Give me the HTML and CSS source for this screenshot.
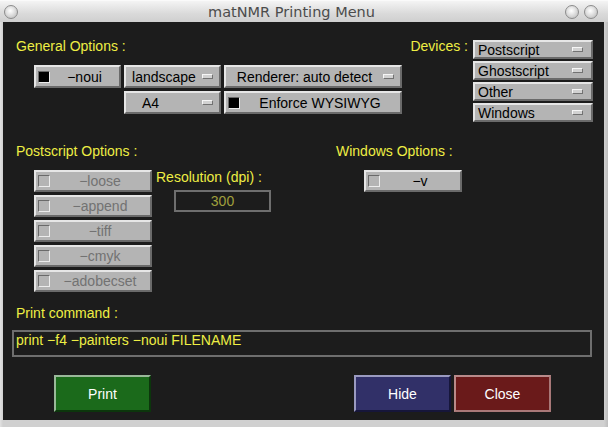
FILE: index.html
```html
<!DOCTYPE html>
<html>
<head>
<meta charset="utf-8">
<link rel="stylesheet" href="styles.css">
</head>
<body>
<div class="window">
  <div class="titlebar">
    <span class="tb-btn"></span>
    <span class="title">matNMR Printing Menu</span>
    <span class="tb-group"><span class="tb-btn"></span><span class="tb-btn"></span></span>
  </div>
  <div class="frame">
    <div class="content">
      <div class="top">
        <div class="general">
          <div class="label">General Options :</div>
          <div class="gen-grid">
            <div class="btn toggle"><span class="ind on"></span><span class="txt">−noui</span></div>
            <div class="btn popup"><span class="txt">landscape</span><span class="pind"></span></div>
            <div class="btn popup"><span class="txt">Renderer: auto detect</span><span class="pind"></span></div>
            <div class="btn popup col2"><span class="txt left">A4</span><span class="pind"></span></div>
            <div class="btn toggle"><span class="ind on"></span><span class="txt">Enforce WYSIWYG</span></div>
          </div>
        </div>
        <div class="devices">
          <div class="label">Devices :</div>
          <div class="dev-list">
            <div class="btn popup dev"><span class="txt">Postscript</span><span class="pind"></span></div>
            <div class="btn popup dev"><span class="txt">Ghostscript</span><span class="pind"></span></div>
            <div class="btn popup dev"><span class="txt">Other</span><span class="pind"></span></div>
            <div class="btn popup dev"><span class="txt">Windows</span><span class="pind"></span></div>
          </div>
        </div>
      </div>

      <div class="mid">
        <div class="ps">
          <div class="label">Postscript Options :</div>
          <div class="ps-row">
            <div class="ps-btns">
              <div class="btn toggle dis"><span class="ind"></span><span class="txt">−loose</span></div>
              <div class="btn toggle dis"><span class="ind"></span><span class="txt">−append</span></div>
              <div class="btn toggle dis"><span class="ind"></span><span class="txt">−tiff</span></div>
              <div class="btn toggle dis"><span class="ind"></span><span class="txt">−cmyk</span></div>
              <div class="btn toggle dis"><span class="ind"></span><span class="txt">−adobecset</span></div>
            </div>
            <div class="res">
              <div class="label">Resolution (dpi) :</div>
              <div class="res-box"><span class="res-val">300</span></div>
            </div>
          </div>
        </div>
        <div class="win">
          <div class="label">Windows Options :</div>
          <div class="btn toggle win-btn"><span class="ind"></span><span class="txt">−v</span></div>
        </div>
      </div>

      <div class="cmd">
        <div class="label">Print command :</div>
        <div class="cmd-box">print −f4 −painters −noui FILENAME</div>
      </div>

      <div class="actions">
        <div class="act print">Print</div>
        <div class="act hide">Hide</div>
        <div class="act close">Close</div>
      </div>
    </div>
  </div>
</div>
</body>
</html>
```
FILE: styles.css
```css
html, body {
  margin: 0;
  padding: 0;
}
body {
  width: 608px;
  height: 427px;
  overflow: hidden;
  font-family: "Liberation Sans", Arial, sans-serif;
  background: #d6d6d6;
}
.window {
  width: 608px;
  height: 427px;
  display: flex;
  flex-direction: column;
  background: #d4d4d4;
}
.titlebar {
  height: 22px;
  box-sizing: border-box;
  display: flex;
  align-items: center;
  padding: 1px 10px 0 4px;
  background: linear-gradient(#f4f4f4, #dadada 60%, #cfcfcf);
  border-top: 1px solid #fafafa;
}
.tb-group {
  display: flex;
  gap: 5px;
}
.tb-btn {
  width: 14px;
  height: 14px;
  box-sizing: border-box;
  border-radius: 50%;
  border: 1px solid #8c8c8c;
  background: radial-gradient(circle at 45% 40%, #ffffff 0, #e6e6e6 35%, #b4b4b4 100%);
}
.title {
  flex: 1;
  text-align: center;
  font-family: "DejaVu Sans", sans-serif;
  font-size: 14.5px;
  color: #4c4c4c;
  white-space: nowrap;
}
.frame {
  flex: 1;
  display: flex;
  padding: 0 4px 7px 3px;
  background: linear-gradient(90deg, #e2e2e2, #d0d0d0 3px, #d0d0d0 calc(100% - 4px), #bdbdbd);
}
.content {
  flex: 1;
  background: #1c1c1c;
  display: flex;
  flex-direction: column;
}
.label {
  color: #eeee44;
  font-size: 14px;
  line-height: 16px;
  white-space: nowrap;
}

/* generic motif-like button */
.btn {
  box-sizing: border-box;
  background: #b4b4b4;
  border: 2px solid;
  border-color: #e6e6e6 #6a6a6a #6a6a6a #e6e6e6;
  display: flex;
  align-items: center;
  font-size: 14px;
  color: #000;
  white-space: nowrap;
}
.btn .txt {
  flex: 1;
  text-align: center;
}
.btn .txt.left {
  text-align: left;
  padding-left: 16px;
}
.ind {
  width: 12px;
  height: 12px;
  box-sizing: border-box;
  margin-left: 2px;
  border: 1px solid;
  border-color: #6a6a6a #ececec #ececec #6a6a6a;
  background: #b4b4b4;
}
.ind.on {
  background: #000;
}
.pind {
  width: 11px;
  height: 5px;
  box-sizing: border-box;
  margin-right: 6px;
  background: #d2d2d2;
  border: 1px solid;
  border-color: #f6f6f6 #727272 #727272 #f6f6f6;
}
.dis .txt {
  color: #727272;
}

/* top section */
.top {
  display: flex;
  padding: 16px 11px 0 13px;
}
.gen-grid {
  display: grid;
  grid-template-columns: 87px 97px 178px;
  grid-auto-rows: 23px;
  gap: 3px;
  margin: 11px 0 0 18px;
}
.col2 {
  grid-column: 2;
}
.devices {
  margin-left: auto;
  display: flex;
  gap: 5px;
}
.dev-list {
  display: flex;
  flex-direction: column;
  gap: 2px;
  margin-top: 2px;
  width: 120px;
}
.dev {
  height: 19px;
}
.dev .txt {
  text-align: left;
  padding-left: 3px;
}
.dev .pind {
  margin-right: 8px;
}

/* middle section */
.mid {
  display: flex;
  margin-top: 21px;
  padding-left: 13px;
}
.ps {
  width: 320px;
}
.ps-row {
  display: flex;
  align-items: flex-start;
  margin: 11px 0 0 18px;
}
.ps-btns {
  display: flex;
  flex-direction: column;
  gap: 3px;
  width: 118px;
}
.ps-btns .btn {
  height: 22px;
}
.res {
  margin-left: 4px;
  margin-top: -1px;
}
.res-box {
  margin: 5px 0 0 18px;
  width: 97px;
  height: 22px;
  box-sizing: border-box;
  border: 2px solid #6e6e6e;
  display: flex;
  align-items: center;
  justify-content: center;
  font-size: 14px;
}
.res-val {
  color: #a0a03c;
}
.win-btn {
  width: 98px;
  height: 22px;
  margin: 11px 0 0 28px;
}

/* command */
.cmd {
  margin-top: 13px;
}
.cmd .label {
  margin-left: 13px;
}
.cmd-box {
  margin: 9px 12px 0 9px;
  height: 27px;
  box-sizing: border-box;
  border: 2px solid #6e6e6e;
  color: #eeee44;
  font-size: 14px;
  line-height: 16px;
  padding-left: 2px;
  white-space: nowrap;
}

/* action buttons */
.actions {
  display: flex;
  margin: 18px 0 0 51px;
}
.act {
  width: 97px;
  height: 37px;
  box-sizing: border-box;
  border: 2px solid;
  display: flex;
  align-items: center;
  justify-content: center;
  color: #fff;
  font-size: 14px;
}
.print {
  background: #1b6a1b;
  border-color: #9ab89a #0c360c #0c360c #9ab89a;
}
.hide {
  margin-left: 203px;
  background: #313068;
  border-color: #9a9ac0 #16163a #16163a #9a9ac0;
}
.close {
  margin-left: 3px;
  background: #6a1a1a;
  border-color: #b88a8a #a87878 #a87878 #b88a8a;
}
```
